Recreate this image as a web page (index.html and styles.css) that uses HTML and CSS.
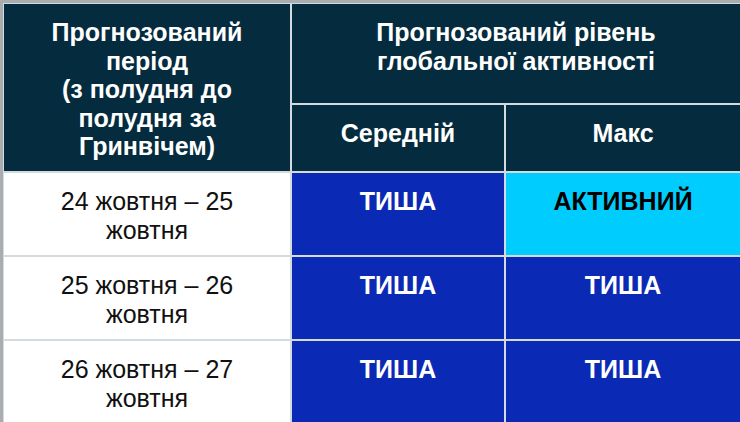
FILE: index.html
```html
<!DOCTYPE html>
<html lang="uk">
<head>
<meta charset="utf-8">
<link rel="stylesheet" href="styles.css">
</head>
<body>
<div class="frame">
<table class="forecast">
  <colgroup>
    <col class="c1"><col class="c2"><col class="c3">
  </colgroup>
  <thead>
    <tr>
      <th rowspan="2" class="head">Прогнозований<br>період<br>(з полудня до<br>полудня за<br>Гринвічем)</th>
      <th colspan="2" class="head">Прогнозований рівень<br>глобальної активності</th>
    </tr>
    <tr>
      <th class="head">Середній</th>
      <th class="head">Макс</th>
    </tr>
  </thead>
  <tbody>
    <tr>
      <td class="date">24 жовтня – 25<br>жовтня</td>
      <td class="lvl quiet">ТИША</td>
      <td class="lvl active">АКТИВНИЙ</td>
    </tr>
    <tr>
      <td class="date">25 жовтня – 26<br>жовтня</td>
      <td class="lvl quiet">ТИША</td>
      <td class="lvl quiet">ТИША</td>
    </tr>
    <tr>
      <td class="date">26 жовтня – 27<br>жовтня</td>
      <td class="lvl quiet">ТИША</td>
      <td class="lvl quiet">ТИША</td>
    </tr>
  </tbody>
</table>
</div>
</body>
</html>
```
FILE: styles.css
```css
html, body {
  margin: 0;
  padding: 0;
  background: #ffffff;
  overflow: hidden;
}
.frame {
  width: 742px;
  border-top: 3px solid #a9adb0;
  border-left: 3px solid #a9adb0;
}
.forecast {
  border-collapse: separate;
  border-spacing: 0;
  table-layout: fixed;
  width: 739px;
  border-top: 1px solid #d4dbe0;
  border-left: 1px solid #d4dbe0;
  font-family: "Liberation Sans", Arial, sans-serif;
  font-size: 25px;
  line-height: 28.5px;
}
.c1 { width: 288px; }
.c2 { width: 214px; }
.c3 { width: 236px; }
.forecast th,
.forecast td {
  border-right: 2px solid #d4dbe0;
  border-bottom: 2px solid #d4dbe0;
  text-align: center;
  vertical-align: top;
  padding: 14px 0 0;
  box-sizing: border-box;
  white-space: nowrap;
}
.head {
  background: #052b3e;
  color: #ffffff;
  font-weight: bold;
}
thead tr:first-child { height: 101px; }
thead tr:last-child { height: 68px; }
tbody tr { height: 84px; }
.date {
  background: #ffffff;
  color: #111111;
  font-weight: normal;
}
.lvl { font-weight: bold; }
.quiet {
  background: #0a29b4;
  color: #ffffff;
}
.active {
  background: #00cdfe;
  color: #000000;
}
```
